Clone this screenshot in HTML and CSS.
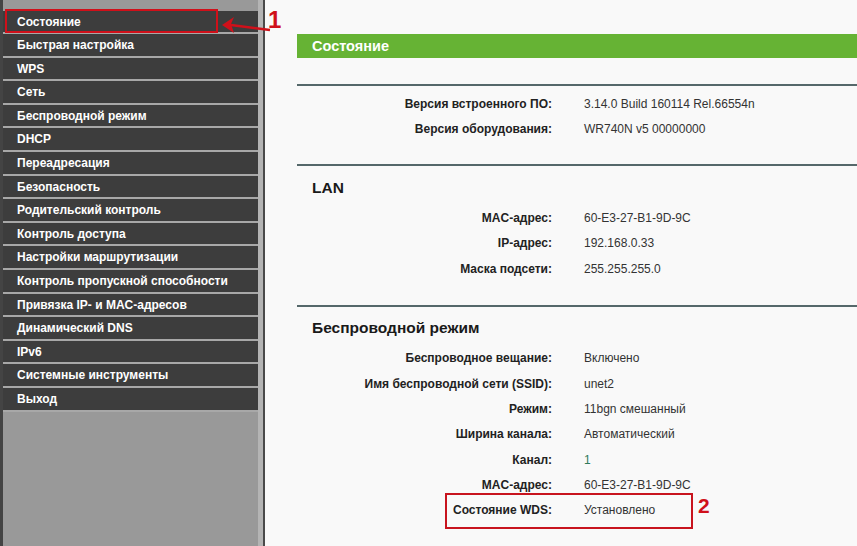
FILE: index.html
```html
<!DOCTYPE html>
<html lang="ru">
<head>
<meta charset="utf-8">
<title>Состояние</title>
<link rel="stylesheet" href="styles.css">
</head>
<body>
<div class="page">
  <nav class="sidebar">
    <ul class="menu">
      <li>Состояние</li>
      <li>Быстрая настройка</li>
      <li>WPS</li>
      <li>Сеть</li>
      <li>Беспроводной режим</li>
      <li>DHCP</li>
      <li>Переадресация</li>
      <li>Безопасность</li>
      <li>Родительский контроль</li>
      <li>Контроль доступа</li>
      <li>Настройки маршрутизации</li>
      <li>Контроль пропускной способности</li>
      <li>Привязка IP- и MAC-адресов</li>
      <li>Динамический DNS</li>
      <li>IPv6</li>
      <li>Системные инструменты</li>
      <li>Выход</li>
    </ul>
  </nav>
  <main class="content">
    <div class="titlebar">Состояние</div>
    <section class="section first">
      <div class="rows">
        <div class="label">Версия встроенного ПО:</div><div class="value">3.14.0 Build 160114 Rel.66554n</div>
        <div class="label">Версия оборудования:</div><div class="value">WR740N v5 00000000</div>
      </div>
    </section>
    <section class="section">
      <h2 class="heading">LAN</h2>
      <div class="rows">
        <div class="label">MAC-адрес:</div><div class="value">60-E3-27-B1-9D-9C</div>
        <div class="label">IP-адрес:</div><div class="value">192.168.0.33</div>
        <div class="label">Маска подсети:</div><div class="value">255.255.255.0</div>
      </div>
    </section>
    <section class="section wireless">
      <h2 class="heading">Беспроводной режим</h2>
      <div class="rows">
        <div class="label">Беспроводное вещание:</div><div class="value">Включено</div>
        <div class="label">Имя беспроводной сети (SSID):</div><div class="value">unet2</div>
        <div class="label">Режим:</div><div class="value">11bgn смешанный</div>
        <div class="label">Ширина канала:</div><div class="value">Автоматический</div>
        <div class="label">Канал:</div><div class="value channel">1</div>
        <div class="label">MAC-адрес:</div><div class="value">60-E3-27-B1-9D-9C</div>
        <div class="label">Состояние WDS:</div><div class="value">Установлено</div>
      </div>
    </section>
  </main>
</div>

<div class="mark mark-box1"></div>
<svg class="mark mark-arrow" width="70" height="30" viewBox="0 0 70 30">
  <path d="M2 16 L14 8 L11 15 L14 24 Z" fill="#d0101a"/>
  <path d="M11 16 L50 21" stroke="#d0101a" stroke-width="2.5" fill="none"/>
</svg>
<div class="mark mark-num1">1</div>
<div class="mark mark-box2"></div>
<div class="mark mark-num2">2</div>
</body>
</html>
```

FILE: styles.css
```css
html, body {
  margin: 0;
  padding: 0;
}
body {
  background: #f9f9f9;
  font-family: "Liberation Sans", Arial, sans-serif;
  width: 857px;
  height: 546px;
  overflow: hidden;
  position: relative;
}
.page {
  display: flex;
  height: 546px;
}
.sidebar {
  width: 255px;
  flex: none;
  background: #999999;
  border-left: 3px solid #444444;
  border-right: 5px solid #b4b4b4;
  box-shadow: 2px 0 0 #4a4a4a;
  padding-top: 10.5px;
  box-sizing: content-box;
}
.menu {
  list-style: none;
  margin: 0;
  padding: 0;
}
.menu li {
  height: 21.6px;
  line-height: 22px;
  border-bottom: 2px solid #a8a8a8;
  background: #3d3d3d;
  color: #ffffff;
  font-weight: bold;
  font-size: 12px;
  padding-left: 14px;
  white-space: nowrap;
}
.content {
  flex: 1;
  margin-left: 34px;
  padding-top: 34px;
  min-width: 0;
}
.titlebar {
  height: 24px;
  line-height: 24px;
  background: #66b334;
  color: #ffffff;
  font-weight: bold;
  font-size: 14.5px;
  padding-left: 15px;
}
.section {
  border-top: 2px solid #55686a;
}
.section.first {
  margin-top: 26px;
  padding-top: 5px;
  padding-bottom: 22px;
}
.section + .section {
  padding-bottom: 23.5px;
}
.heading {
  margin: 12.5px 0 7px 15px;
  font-size: 15.5px;
  line-height: 20px;
  font-weight: bold;
  color: #1a1a1a;
}
.wireless .heading {
  margin-top: 11.5px;
}
.rows {
  display: grid;
  grid-template-columns: 255px 1fr;
  column-gap: 32px;
  grid-auto-rows: 25.4px;
  align-items: center;
  font-size: 12px;
}
.label {
  text-align: right;
  font-weight: bold;
  color: #222222;
  white-space: nowrap;
}
.value {
  color: #333333;
  white-space: nowrap;
}
.value.channel {
  color: #2f7a5a;
}
.mark {
  position: absolute;
}
.mark-box1 {
  left: 5px;
  top: 9px;
  width: 209px;
  height: 20px;
  border: 2px solid #d0101a;
}
.mark-arrow {
  left: 220px;
  top: 9px;
}
.mark-num1 {
  left: 268px;
  top: 7px;
  color: #d0101a;
  font-size: 24px;
  font-weight: bold;
  line-height: 26px;
}
.mark-box2 {
  left: 445px;
  top: 493px;
  width: 244px;
  height: 32px;
  border: 2px solid #c8141e;
}
.mark-num2 {
  left: 698px;
  top: 494px;
  color: #d0101a;
  font-size: 21px;
  font-weight: bold;
  line-height: 24px;
}
```
